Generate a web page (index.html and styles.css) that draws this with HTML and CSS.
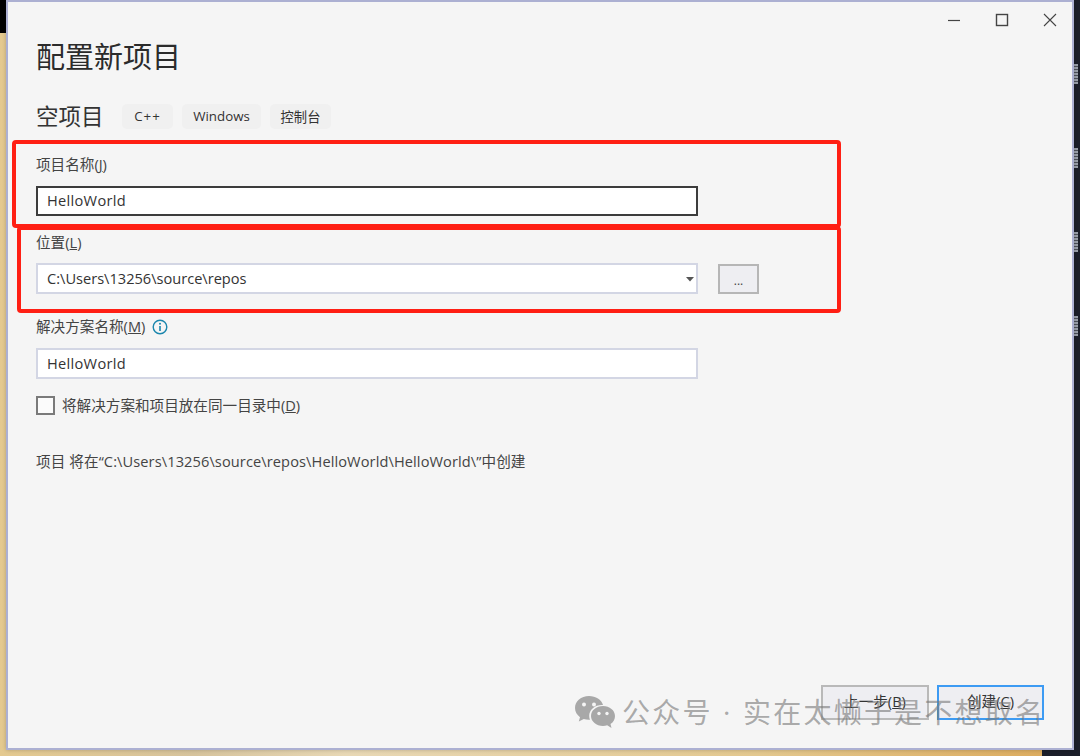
FILE: index.html
```html
<!DOCTYPE html>
<html lang="zh-CN">
<head>
<meta charset="utf-8">
<title>配置新项目</title>
<link rel="stylesheet" href="styles.css">
</head>
<body>
<div class="desktop">
  <div class="strip-top"></div>
  <div class="strip-right">
    <span class="tick t1"></span><span class="tick t2"></span><span class="tick t3"></span><span class="tick t4"></span>
  </div>
  <div class="strip-corner"></div>
  <main class="window">
    <div class="controls">
      <svg class="ctl" width="14" height="14" viewBox="0 0 14 14"><path d="M1 7.500h12" stroke="#444" stroke-width="1.2" fill="none"/></svg>
      <svg class="ctl" width="14" height="14" viewBox="0 0 14 14"><rect x="1.500" y="1.500" width="11" height="11" stroke="#444" stroke-width="1.4" fill="none"/></svg>
      <svg class="ctl" width="14" height="14" viewBox="0 0 14 14"><path d="M1 1l12 12M13 1L1 13" stroke="#444" stroke-width="1.1" fill="none"/></svg>
    </div>
    <div class="content">
      <h1 class="title">配置新项目</h1>
      <div class="subhead">
        <h2 class="subtitle">空项目</h2>
        <div class="chips">
          <span class="chip chip-cpp">C++</span>
          <span class="chip chip-win">Windows</span>
          <span class="chip chip-con">控制台</span>
        </div>
      </div>
      <div class="field field-name">
        <label class="label">项目名称(<u>J</u>)</label>
        <div class="input input-focus input-name">HelloWorld</div>
      </div>
      <div class="field field-loc">
        <label class="label">位置(<u>L</u>)</label>
        <div class="combo-row">
          <div class="input combo">C:\Users\13256\source\repos
            <svg class="caret" width="8" height="5" viewBox="0 0 8 5"><path d="M0 0h8L4 4.500z" fill="#555"/></svg>
          </div>
          <button class="browse">...</button>
        </div>
      </div>
      <div class="field field-sol">
        <label class="label">解决方案名称(<u>M</u>)<svg class="info" width="16" height="16" viewBox="0 0 16 16"><circle cx="8" cy="8" r="6.800" fill="none" stroke="#1a86ad" stroke-width="1.400"/><circle cx="8" cy="4.800" r="1" fill="#1a86ad"/><path d="M8 7v5" stroke="#1a86ad" stroke-width="1.600"/></svg></label>
        <div class="input input-name">HelloWorld</div>
      </div>
      <div class="check-row">
        <span class="checkbox"></span>
        <span class="label">将解决方案和项目放在同一目录中(<u>D</u>)</span>
      </div>
      <p class="path">项目 将在“C:\Users\13256\source\repos\HelloWorld\HelloWorld\”中创建</p>
    </div>
    <div class="actions">
      <button class="btn">上一步(<u>B</u>)</button>
      <button class="btn btn-primary">创建(<u>C</u>)</button>
    </div>
  </main>
  <div class="mark mark-name"></div>
  <div class="mark mark-loc"></div>
  <div class="watermark">
    <svg width="42" height="34" viewBox="0 0 42 34"><path d="M15 1C7 1 1 6.300 1 13c0 3.800 2 7 5 9.200L4.800 26.500l5-2.600c1.500.5 3.200.8 5 .8h1.200c-.5-1.200-.8-2.500-.8-3.800 0-6.200 5.600-11 12.600-11h1.200C27.500 4.800 21.800 1 15 1z" fill="#a8a8a8"/><circle cx="10" cy="9.500" r="2" fill="#f5f5f5"/><circle cx="20" cy="9.500" r="2" fill="#f5f5f5"/><path d="M29 11c-6.600 0-12 4.400-12 10s5.400 10 12 10c1.500 0 2.900-.2 4.200-.7l4.300 2.700-1-4c3-1.900 4.500-4.700 4.500-8 0-5.600-5.400-10-12-10z" fill="#a8a8a8"/><circle cx="25" cy="18.500" r="1.700" fill="#f5f5f5"/><circle cx="33" cy="18.500" r="1.700" fill="#f5f5f5"/></svg>
    <span class="wm-text"><span class="wm-sep">公众号 · </span>实在太懒于是不想取名</span>
  </div>
</div>
</body>
</html>
```
FILE: styles.css
```css
* { box-sizing: border-box; }
html, body { margin: 0; height: 100%; }
body { overflow: hidden; font-family: "Open Sans", "Noto Sans CJK SC", sans-serif; color: #333; }
.desktop {
  position: relative;
  width: 1080px;
  height: 756px;
  overflow: hidden;
  background: linear-gradient(90deg, #e4c98f 0, #d6c39c 18%, #e8d8b5 32%, #e3c88f 70%, #dba858 100%);
}
.strip-top { position: absolute; left: 0; top: 0; width: 10px; height: 33px; background: #000; }
.strip-right { position: absolute; right: 0; top: 0; width: 10px; height: 756px; background: #1b1e29; }
.strip-corner { position: absolute; right: 10px; bottom: 0; width: 28px; height: 6px; background: #1b1e29; }
.tick { position: absolute; left: 2px; width: 6px; height: 20px; background: repeating-linear-gradient(180deg, #9aa0aa 0 2px, #4c505a 2px 3px); }
.t1 { top: 64px; } .t2 { top: 148px; } .t3 { top: 232px; } .t4 { top: 316px; }
.window {
  position: absolute;
  left: 6px;
  top: 0;
  width: 1068px;
  height: 750px;
  background: #f5f5f5;
  border: 2px solid #acb0d2;
  box-shadow: 0 0 4px rgba(0,0,0,.22);
}
.controls { position: absolute; top: 11px; right: 15px; display: flex; gap: 34px; }
.ctl { display: block; }
.content { padding: 37px 0 0 28px; width: 760px; }
.title { margin: 0; font-size: 29px; line-height: 36px; font-weight: 400; color: #2b2b2b; }
.subhead { display: flex; align-items: center; margin-top: 25px; height: 34px; }
.subtitle { margin: 0; width: 86px; font-size: 22.500px; font-weight: 400; color: #333; line-height: 34px; }
.chips { display: flex; gap: 9px; margin-top: -2px; }
.chip { display: flex; align-items: center; justify-content: center; height: 25px; background: #f0f0f0; border-radius: 5px; font-size: 13.300px; color: #333; }
.chip-cpp { width: 51px; letter-spacing: 1px; }
.chip-win { width: 79px; }
.chip-con { width: 61px; }
.field { display: flex; flex-direction: column; }
.label { display: block; height: 20px; line-height: 20px; font-size: 14.600px; color: #444; white-space: nowrap; }
.field-name { margin-top: 20px; gap: 12px; }
.field-loc { margin-top: 16px; gap: 11px; }
.field-sol { margin-top: 22px; gap: 12px; }
.info { margin-left: 7px; vertical-align: -3px; }
.input { display: flex; align-items: center; position: relative; width: 662px; height: 31px; padding: 0 0 2px 9px; background: #fff; border: 2px solid #d3d6e4; font-size: 14.600px; color: #333; }
.input-name { letter-spacing: .3px; }
.input-focus { border-color: #3c3c3c; height: 30px; }
.combo-row { display: flex; gap: 20px; align-items: center; }
.caret { position: absolute; right: 2px; top: 12px; }
.browse { width: 41px; height: 30px; padding: 5px 0 0; background: #eeeef2; border: 2px solid #b6b6b6; font: 12px "Open Sans", sans-serif; color: #444; line-height: 18px; }
.check-row { display: flex; align-items: center; gap: 7px; margin-top: 16px; height: 20px; }
.checkbox { width: 19px; height: 19px; border: 2px solid #7a7a7a; background: #fbfbfb; }
.path { margin: 36px 0 0; font-size: 14.600px; letter-spacing: .1px; line-height: 20px; color: #444; white-space: nowrap; }
.actions { position: absolute; top: 683px; left: 813px; display: flex; gap: 8px; }
.btn { width: 108px; height: 35px; background: #eeeef2; border: 2px solid #b9b9b9; font: 14.600px "Open Sans", "Noto Sans CJK SC", sans-serif; color: #333; padding: 0 0 4px; }
.btn-primary { width: 107px; border-color: #3d9bf3; }
.mark { position: absolute; border: 4px solid #ff1f14; border-radius: 4px; }
.mark-name { left: 12px; top: 140px; width: 829px; height: 88px; }
.mark-loc { left: 17px; top: 226px; width: 824px; height: 87px; }
.watermark { position: absolute; left: 574px; top: 695px; display: flex; align-items: center; gap: 6px; font-size: 28px; letter-spacing: 2.200px; color: rgba(120,120,120,.62); white-space: nowrap; line-height: 34px; }
.wm-sep { word-spacing: 1px; }
```
